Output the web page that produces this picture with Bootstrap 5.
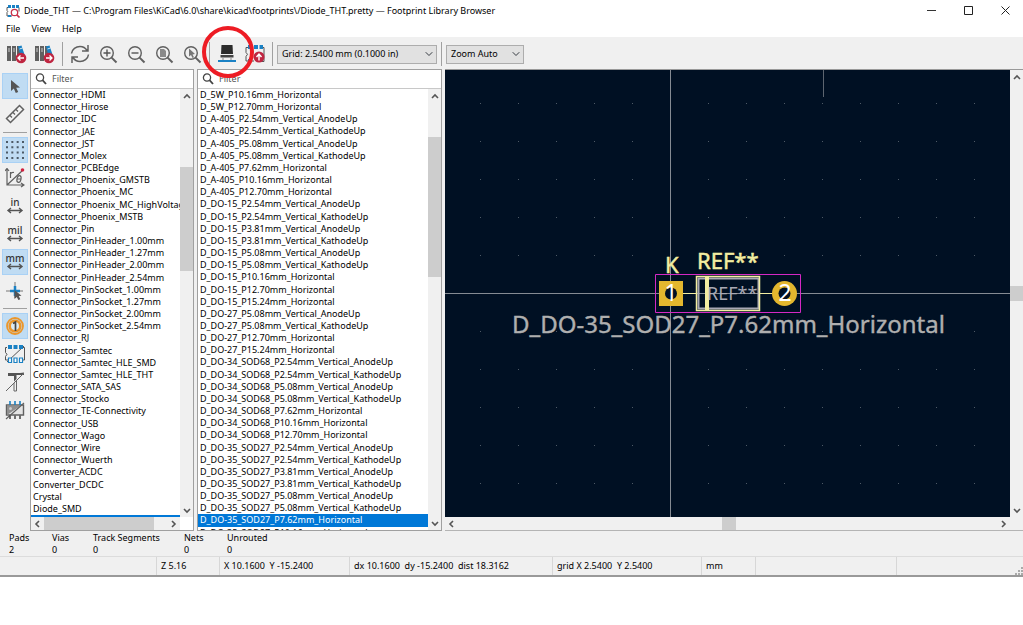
<!DOCTYPE html>
<html lang="en">
<head>
<meta charset="utf-8">
<meta name="viewport" content="width=device-width, initial-scale=1">
<title>Footprint Library Browser</title>
<link href="https://cdn.jsdelivr.net/npm/bootstrap@5.3.0/dist/css/bootstrap.min.css" rel="stylesheet">
<style>
  body { font: 9px/12px "Noto Sans", sans-serif; color: #000; background: #fff; }
  svg { display: block; flex: none; }
  button, select, input { font: inherit; color: inherit; }
  .title-row { height: 21px; padding: 0 0 0 6px; gap: 4px; overflow: hidden; }
  .win-group { margin-right: -1px; }
  .win-btn { width: 37px; height: 20px; }
  .plain-btn { border: 0; background: none; padding: 0; display: flex; align-items: center; justify-content: center; }
  .menu-row { height: 16px; padding: 0 6px; gap: 11px; line-height: 14px; }
  .menu-row a { color: inherit; text-decoration: none; }
  .app-body { background: #f0f0f0; border-bottom: 2px solid #999; }
  .tool-row { height: 32px; padding: 2px 3px 0; }
  .tool-row .plain-btn { width: 28px; height: 28px; }
  .v-rule { width: 1px; height: 24px; background: #a0a0a0; margin: 0 3px; }
  .tool-row .form-select { height: 19px; padding: 0 18px 0 4px; margin: 0 1px; font-size: 9px; line-height: 16px; color: #000;
    border: 1px solid #adadad; border-radius: 0; background-color: #e1e1e1; background-position: right 3px center; background-size: 8px 8px; }
  .tool-row .grid-pick { width: 160px; } .tool-row .zoom-pick { width: 78px; }
  .side-tools { width: 30px; padding: 4px 2px; gap: 2px; }
  .side-tools .plain-btn { width: 26px; height: 26px; }
  .side-tools .on { background: #c0dcf3; box-shadow: inset 0 0 0 1px #a9d1f5; }
  .side-tools text { font-size: 10px; font-weight: 500; fill: #333; text-anchor: middle; }
  .h-rule { height: 1px; width: 24px; background: #a0a0a0; margin: 3px 0 2px; }
  .work { height: 462px; }
  .pane { border: 1px solid #a0a0a0; background: #fff; min-width: 0; }
  .lib-pane { width: 164px; } .fp-pane { width: 245px; margin-left: 3px; }
  .view-pane { margin-left: 3px; border-top: 1px solid #999; border-bottom: 1px solid #b4b4b4; }
  .shrinkable { min-width: 0; min-height: 0; }
  .filter-row { height: 19px; padding: 0 4px; gap: 5px; border-bottom: 1px solid #c8c8c8; }
  .filter-row input { border: 0; outline: 0; width: 100%; padding: 0; background: none; }
  .filter-row input::placeholder { color: #555; opacity: 1; }
  .name-list { overflow: hidden; min-width: 0; min-height: 0; }
  .name-list ul { margin: 0; padding: 0; list-style: none; display: flex; flex-direction: column; }
  #libs { height: 438px; } #parts { height: 450px; }
  .name-list li { flex: 1 1 0; min-height: 0; padding: 0 2px; white-space: nowrap; line-height: 11px; }
  .name-list .sel { background: #0078d7; color: #fff; }
  .bar-v { width: 13px; background: #f0f0f0; padding: 3px 0 2px; }
  .bar-h { height: 13px; background: #f0f0f0; padding: 0 2px; }
  .beside-v { margin-right: 13px; } .above-h { margin-bottom: 13px; }
  .thumb { background: #cdcdcd; align-self: stretch; }
  .bar-v svg { margin: 0 auto; }
  .view { background: #001023; }
  .info { height: 25px; padding: 1px 9px; display: grid; grid-template-columns: 43px 41px 91px 43px 1fr; }
  .status { height: 19px; border-top: 1px solid #dcdcdc; }
  .status div { padding: 3px 4px; border-right: 1px solid #d7d7d7; white-space: pre; }
  .f-blank { width: 157px; } .f-zoom { width: 63px; } .f-pos { width: 130px; } .f-delta { width: 203px; }
  .f-grid { width: 149px; } .f-unit { width: 54px; } .f-tool { width: 141px; }
  .marker { left: 201px; top: 25px; pointer-events: none; }
</style>
</head>
<body>
<svg width="0" height="0" class="position-absolute" aria-hidden="true">
  <defs>
    <g id="up"><path d="M1 6 4 3l3 3" fill="none" stroke="#555" stroke-width="1.600"/></g>
    <g id="down"><path d="M1 2l3 3 3-3" fill="none" stroke="#555" stroke-width="1.600"/></g>
    <g id="left"><path d="M6 1 3 4l3 3" fill="none" stroke="#555" stroke-width="1.600"/></g>
    <g id="right"><path d="M2 1l3 3-3 3" fill="none" stroke="#555" stroke-width="1.600"/></g>
    <g id="lens"><circle cx="8" cy="8" r="6.300" fill="none" stroke="#606060" stroke-width="1.400"/><path d="M12.600 12.600 17.500 17.500" stroke="#606060" stroke-width="2"/></g>
    <g id="find"><circle cx="5" cy="4.500" r="3.600" fill="none" stroke="#444" stroke-width="1.300"/><path d="M7.500 7.200 11 11" stroke="#444" stroke-width="1.800"/></g>
    <g id="books"><path d="M0 1h4v15H0zM5 1h4v15H5zM10 1h3v15h-3z" fill="#606060"/><path d="M1 4h2M6 4h2M1 6h2M6 6h2" stroke="#ccc"/><path d="M11 1.500 14.500.5l3 9-4 1z" fill="#1a81c4"/><path d="m12.500 4 3-1" stroke="#fff" stroke-width=".8"/><circle cx="14" cy="13" r="5.300" fill="#bf2641"/></g>
    <g id="arrow-cur"><path d="M0 0v11l2.800-2.400L4.800 13l2.400-1L5.200 7.800 9 7.400z" fill="#545454"/></g>
    <g id="measure"><path d="M3 12.500h14M6 10l-3 2.500L6 15M14 10l3 2.500-3 2.500" fill="none" stroke="#545454" stroke-width="1.400"/></g>
  </defs>
</svg>

<div class="position-relative">
  <header class="title-row d-flex align-items-center">
    <svg width="14" height="14" viewBox="0 0 14 14"><path d="M2 3.500H1v3q1.500.7 0 2v3.500h5M12 3.500h1v4" fill="none" stroke="#555"/><path d="M2 1h3v3H2zM6 1h3v3H6zM10 1h3v3h-3zM2 11h3v2H2z" fill="#1a81c4"/><circle cx="8.500" cy="8.500" r="3.200" fill="#fff" stroke="#c8324b" stroke-width="1.300"/><path d="m11 11 2.500 2.500" stroke="#c8324b" stroke-width="1.700"/></svg>
    <span class="text-nowrap me-auto">Diode_THT — C:\Program Files\KiCad\6.0\share\kicad\footprints\/Diode_THT.pretty — Footprint Library Browser</span>
    <div class="d-flex win-group">
      <button class="plain-btn win-btn" aria-label="Minimize"><svg width="9" height="9"><path d="M0 4.500h9" stroke="#333"/></svg></button>
      <button class="plain-btn win-btn" aria-label="Maximize"><svg width="9" height="9"><path d="M.5.5h8v8h-8z" fill="none" stroke="#222"/></svg></button>
      <button class="plain-btn win-btn" aria-label="Close"><svg width="9" height="9"><path d="m.5.5 8 8m0-8-8 8" stroke="#222"/></svg></button>
    </div>
  </header>
  <nav class="menu-row d-flex align-items-center"><a href="#">File</a><a href="#">View</a><a href="#">Help</a></nav>

  <div class="app-body">
    <div class="tool-row d-flex align-items-center">
      <button class="plain-btn" aria-label="Previous library"><svg width="20" height="19" viewBox="0 0 20 19"><use href="#books"/><path d="M17 13h-6m2.500-2.500L11 13l2.500 2.500" fill="none" stroke="#fff" stroke-width="1.300"/></svg></button>
      <button class="plain-btn" aria-label="Next library"><svg width="20" height="19" viewBox="0 0 20 19"><use href="#books"/><path d="M11 13h6m-2.500-2.500L17 13l-2.500 2.500" fill="none" stroke="#fff" stroke-width="1.300"/></svg></button>
      <div class="v-rule"></div>
      <button class="plain-btn" aria-label="Refresh"><svg width="20" height="20" viewBox="0 0 20 20" fill="none" stroke="#606060" stroke-width="1.500"><path d="M1.500 9.500C2 5 6 2.500 10 2.500c3 0 5.500 1.500 7 4M18.500 10.500c-.5 4.500-4.500 7-8.500 7-3 0-5.500-1.500-7-4M18 1v6h-6M2 19v-6h6"/></svg></button>
      <button class="plain-btn" aria-label="Zoom in"><svg width="19" height="19"><use href="#lens"/><path d="M8 4.500v7M4.500 8h7" stroke="#545454" stroke-width="1.400"/></svg></button>
      <button class="plain-btn" aria-label="Zoom out"><svg width="19" height="19"><use href="#lens"/><path d="M4.500 8h7" stroke="#545454" stroke-width="1.400"/></svg></button>
      <button class="plain-btn" aria-label="Zoom to fit"><svg width="19" height="19"><use href="#lens"/><path d="M5 4h4l2 2v6H5z" fill="#8a8a8a"/></svg></button>
      <button class="plain-btn" aria-label="Zoom to objects"><svg width="19" height="19"><use href="#lens"/><path d="M6 3.500v8l2-1.500 1.500 3 1.500-.8L9.500 9.500l2.500-.4z" fill="#777"/></svg></button>
      <div class="v-rule"></div>
      <button class="plain-btn" aria-label="3D viewer"><svg width="20" height="20" viewBox="0 0 20 20"><path d="M4.500 1h11l.5 9H4z" fill="#2c2c2c"/><path d="M3.500 11h13v2.500h-13z" fill="#444"/><path d="M6 14v2m8-2v2" stroke="#888"/><path d="M1 16h18v2H1z" fill="#1a81c4"/></svg></button>
      <button class="plain-btn" aria-label="Insert footprint in board"><svg width="20" height="20" viewBox="0 0 20 20"><path d="M3 3.500H1v5q3 1.500 0 4V17h8M17 3.500h2v14h-3" fill="none" stroke="#545454"/><path d="M3 1h4v4H3zM9 1h4v4H9zM14.500 1H18v4h-3.500zM3 15h3v3H3z" fill="#1a81c4"/><circle cx="14" cy="13" r="5.500" fill="#bf2641"/><path d="M14 16.500v-6m-2.500 2.500 2.500-3 2.500 3" fill="none" stroke="#fff" stroke-width="1.400"/></svg></button>
      <div class="v-rule"></div>
      <select class="form-select grid-pick" aria-label="Grid"><option>Grid: 2.5400 mm (0.1000 in)</option></select>
      <div class="v-rule"></div>
      <select class="form-select zoom-pick" aria-label="Zoom"><option>Zoom Auto</option></select>
    </div>

    <main class="work d-flex">
      <div class="side-tools d-flex flex-column align-items-center">
        <button class="plain-btn on" aria-label="Select"><svg width="9" height="13"><use href="#arrow-cur"/></svg></button>
        <button class="plain-btn" aria-label="Measure"><svg width="20" height="20" viewBox="0 0 20 20"><path d="M1.500 14.500 14.500 1.500l4 4-13 13z" fill="#f4f4f4" stroke="#606060" stroke-width="1.500"/><path d="m5 11.500 2 2M8 8.500l2 2M11 5.500l2 2" stroke="#606060" stroke-width="1.300"/></svg></button>
        <div class="h-rule"></div>
        <button class="plain-btn on" aria-label="Show grid"><svg width="20" height="20" viewBox="0 0 20 20"><path d="M1 2h20M1 7.300h20M1 12.600h20M1 18h20" stroke="#4d5a66" stroke-width="2" stroke-dasharray="2 3.330"/></svg></button>
        <button class="plain-btn" aria-label="Polar coordinates"><svg width="20" height="20" viewBox="0 0 20 20"><path d="M2 0v17h17M0 3l2-2.500L4 3M16 15l3 2-3 2M2 17 17 3" fill="none" stroke="#606060" stroke-width="1.200"/><circle cx="17.500" cy="2" r="1.800" fill="#d0213f"/><path d="M5.500 10V4m0 2q1-2 3.500-1.500" fill="none" stroke="#606060" stroke-width="1.200"/><ellipse cx="14" cy="11" rx="2" ry="3.500" fill="none" stroke="#606060" stroke-width="1.200" transform="rotate(12 14 11)"/><path d="M12 11h4" stroke="#606060"/></svg></button>
        <button class="plain-btn" aria-label="Inches"><svg class="overflow-visible" width="20" height="18"><text x="10" y="9">in</text><use href="#measure" y="1"/></svg></button>
        <button class="plain-btn" aria-label="Mils"><svg class="overflow-visible" width="20" height="18"><text x="10" y="9">mil</text><use href="#measure" y="1"/></svg></button>
        <button class="plain-btn on" aria-label="Millimeters"><svg class="overflow-visible" width="20" height="18"><text x="10" y="9">mm</text><use href="#measure" y="1"/></svg></button>
        <button class="plain-btn" aria-label="Full-window crosshairs"><svg width="20" height="20" viewBox="0 0 20 20"><path d="M10 2v16M1 11h17" stroke="#777"/><path d="M10 6v10M5 11h10" stroke="#1a81c4" stroke-width="2.500"/><path d="M9.500 10v9l2.300-2 1.600 3 1.900-.8-1.500-3.200 2.700-.3z" fill="#545454"/></svg></button>
        <div class="h-rule"></div>
        <button class="plain-btn on" aria-label="Pad numbers"><svg width="20" height="20" viewBox="0 0 20 20"><circle cx="10" cy="10" r="8" fill="#c0dcf3" stroke="#eb962b" stroke-width="1.800"/><circle cx="10" cy="10" r="5.300" fill="#dcebf5" stroke="#eb962b" stroke-width="2.600"/><path d="M8 7.500 10.500 6v9" fill="none" stroke="#444" stroke-width="1.700"/></svg></button>
        <button class="plain-btn" aria-label="Sketch pads"><svg width="20" height="20" viewBox="0 0 20 20"><path d="M2 3.500H.5v5q3 1.500 0 4V16H3M18 3.500h1.500V16H18M2 18 19 2" fill="none" stroke="#545454"/><path d="M3 1h4v4H3zM8.500 1h4v4h-4zM14 1h4v4h-4z" fill="#1a81c4"/><path d="M3.500 14h3v4.500h-3zM9 14h3v4.500H9zM14.500 14h3v4.500h-3z" fill="#fff" stroke="#1a81c4" stroke-width="1.200"/></svg></button>
        <button class="plain-btn" aria-label="Sketch text"><svg width="20" height="20" viewBox="0 0 20 20"><path d="M3 1h12l4-.5V3H11.500v4L9 9.500V4H3z" fill="#545454"/><path d="M1 19 19 1M9 11v8h2.500V8" fill="none" stroke="#666"/></svg></button>
        <button class="plain-btn" aria-label="Sketch graphics"><svg width="20" height="20" viewBox="0 0 20 20"><path d="M1.500 5h17v10h-17z" fill="#e4e4e4" stroke="#606060" stroke-width="1.400"/><path d="M2 5.500h14L2 15z" fill="#8f8f8f"/><circle cx="5.500" cy="8.500" r="1.500" fill="#ccc"/><path d="M1 19 19 3" stroke="#606060" stroke-width="1.200"/><path d="M5 15.500V19m5-3.500V19m5-3.500V19" stroke="#444" stroke-width="1.500"/><path d="M5 1v4m5-4v4m5-4v4" stroke="#1a81c4" stroke-width="1.600"/></svg></button>
      </div>

      <section class="pane lib-pane d-flex flex-column flex-shrink-0">
        <label class="filter-row d-flex align-items-center flex-shrink-0"><svg width="12" height="12"><use href="#find"/></svg><input type="search" placeholder="Filter" aria-label="Filter libraries"></label>
        <div class="d-flex flex-fill shrinkable">
          <div class="d-flex flex-column flex-fill name-list">
            <div class="name-list flex-fill"><ul id="libs"></ul></div>
            <div class="bar-h d-flex align-items-center flex-shrink-0"><svg width="8" height="8"><use href="#left"/></svg><div style="flex:3 0 0"></div><div class="thumb" style="flex:110 0 0"></div><div style="flex:16 0 0"></div><svg width="8" height="8"><use href="#right"/></svg></div>
          </div>
          <div class="bar-v above-h d-flex flex-column flex-shrink-0"><svg width="8" height="8"><use href="#up"/></svg><div style="flex:67 0 0"></div><div class="thumb" style="flex:104 0 0"></div><div style="flex:235 0 0"></div><svg width="8" height="8"><use href="#down"/></svg></div>
        </div>
      </section>

      <section class="pane fp-pane d-flex flex-column flex-shrink-0">
        <label class="filter-row d-flex align-items-center flex-shrink-0"><svg width="12" height="12"><use href="#find"/></svg><input type="search" placeholder="Filter" aria-label="Filter footprints"></label>
        <div class="d-flex flex-fill shrinkable">
          <div class="name-list flex-fill"><ul id="parts"></ul></div>
          <div class="bar-v d-flex flex-column flex-shrink-0"><svg width="8" height="8"><use href="#up"/></svg><div style="flex:37 0 0"></div><div class="thumb" style="flex:139 0 0"></div><div style="flex:242 0 0"></div><svg width="8" height="8"><use href="#down"/></svg></div>
        </div>
      </section>

      <section class="view-pane d-flex flex-fill flex-column shrinkable">
        <div class="d-flex flex-fill shrinkable">
          <div class="view flex-fill overflow-hidden shrinkable">
            <svg width="100%" height="100%" viewBox="445 70 565 447" preserveAspectRatio="xMinYMin slice">
              <defs><pattern id="dots" x="442" y="65" width="38" height="38" patternUnits="userSpaceOnUse"><rect x="0" y="0" width="1" height="1" fill="#4e5a66"/></pattern></defs>
              <rect x="445" y="70" width="2000" height="447" fill="url(#dots)"/>
              <path d="M823.500 70v27" stroke="#5d6570"/>
              <path d="M670.500 70v447M445 293.500h2000" stroke="#858b93"/>
              <path d="M698.500 278.500h60v30h-60z" fill="none" stroke="#a9a9b4" stroke-width="2"/>
              <path d="M683 293.500h13M760 293.500h13" stroke="#f2eda1"/>
              <path d="M696.500 276.500h63v34h-63z" fill="none" stroke="#f2eda1" stroke-width="1.500"/>
              <path d="M707 277v33" stroke="#f2eda1" stroke-width="4"/>
              <path d="M655.500 274.500h145v38h-145z" fill="none" stroke="#d428c4"/>
              <path d="M659 281h24v25h-24z" fill="#e3b72e"/><circle cx="671" cy="293.500" r="6" fill="#001023"/>
              <circle cx="784.500" cy="293.500" r="12.500" fill="#e3b72e"/><circle cx="784.500" cy="293.500" r="6" fill="#001023"/>
              <g font-family="Noto Sans, sans-serif">
                <g fill="#fff" font-size="23" text-anchor="middle"><text x="671" y="301">1</text><text x="785" y="301">2</text></g>
                <g fill="#f2eda1" stroke="#f2eda1" stroke-width=".5" font-size="22"><text x="665" y="273">K</text><text x="697" y="269">REF**</text></g>
                <text x="707" y="300" font-size="18" fill="#a9a9b4">REF**</text>
                <text x="512" y="333" font-size="24" fill="#afafaf" stroke="#afafaf" stroke-width=".4">D_DO-35_SOD27_P7.62mm_Horizontal</text>
              </g>
            </svg>
          </div>
          <div class="bar-v d-flex flex-column flex-shrink-0"><svg width="8" height="8"><use href="#up"/></svg><div style="flex:205 0 0"></div><div class="thumb" style="flex:14 0 0"></div><div style="flex:206 0 0"></div><svg width="8" height="8"><use href="#down"/></svg></div>
        </div>
        <div class="bar-h beside-v d-flex align-items-center"><svg width="8" height="8"><use href="#left"/></svg><div style="flex:267 0 0"></div><div class="thumb" style="flex:14 0 0"></div><div style="flex:264 0 0"></div><svg width="8" height="8"><use href="#right"/></svg></div>
      </section>
    </main>

    <div class="info">
      <div>Pads<br>2</div><div>Vias<br>0</div><div>Track Segments<br>0</div><div>Nets<br>0</div><div>Unrouted<br>0</div>
    </div>
    <footer class="status d-flex">
      <div class="f-blank"></div><div class="f-zoom">Z 5.16</div><div class="f-pos">X 10.1600  Y -15.2400</div><div class="f-delta">dx 10.1600  dy -15.2400  dist 18.3162</div><div class="f-grid">grid X 2.5400  Y 2.5400</div><div class="f-unit">mm</div><div class="f-tool"></div>
      <svg class="ms-auto align-self-end" width="8" height="8"><path d="M0 7h8M3 4h5M6 1h2" stroke="#aaa" stroke-width="2" stroke-dasharray="2 1"/></svg>
    </footer>
  </div>
  <svg class="marker position-absolute" width="54" height="54"><circle cx="27" cy="27" r="24" fill="none" stroke="#ed1c24" stroke-width="4"/></svg>
</div>

<script src="https://cdn.jsdelivr.net/npm/bootstrap@5.3.0/dist/js/bootstrap.bundle.min.js"></script>
<script>
  const both = s => [s + '_Vertical_AnodeUp', s + '_Vertical_KathodeUp'];
  const flat = s => [s + '_Horizontal'];
  const libs = ['HDMI', 'Hirose', 'IDC', 'JAE', 'JST', 'Molex', 'PCBEdge', 'Phoenix_GMSTB', 'Phoenix_MC', 'Phoenix_MC_HighVoltage',
    'Phoenix_MSTB', 'Pin', 'PinHeader_1.00mm', 'PinHeader_1.27mm', 'PinHeader_2.00mm', 'PinHeader_2.54mm', 'PinSocket_1.00mm',
    'PinSocket_1.27mm', 'PinSocket_2.00mm', 'PinSocket_2.54mm', 'RJ', 'Samtec', 'Samtec_HLE_SMD', 'Samtec_HLE_THT', 'SATA_SAS',
    'Stocko', 'TE-Connectivity', 'USB', 'Wago', 'Wire', 'Wuerth'].map(n => 'Connector_' + n)
    .concat('Converter_ACDC', 'Converter_DCDC', 'Crystal', 'Diode_SMD', 'Diode_THT');
  const parts = [
    flat('D_5W_P10.16mm'), flat('D_5W_P12.70mm'),
    both('D_A-405_P2.54mm'), both('D_A-405_P5.08mm'), flat('D_A-405_P7.62mm'), flat('D_A-405_P10.16mm'), flat('D_A-405_P12.70mm'),
    both('D_DO-15_P2.54mm'), both('D_DO-15_P3.81mm'), both('D_DO-15_P5.08mm'), flat('D_DO-15_P10.16mm'), flat('D_DO-15_P12.70mm'), flat('D_DO-15_P15.24mm'),
    both('D_DO-27_P5.08mm'), flat('D_DO-27_P12.70mm'), flat('D_DO-27_P15.24mm'),
    both('D_DO-34_SOD68_P2.54mm'), both('D_DO-34_SOD68_P5.08mm'), flat('D_DO-34_SOD68_P7.62mm'), flat('D_DO-34_SOD68_P10.16mm'), flat('D_DO-34_SOD68_P12.70mm'),
    both('D_DO-35_SOD27_P2.54mm'), both('D_DO-35_SOD27_P3.81mm'), both('D_DO-35_SOD27_P5.08mm'), flat('D_DO-35_SOD27_P7.62mm'), flat('D_DO-35_SOD27_P10.16mm')
  ].flat();
  const fill = (id, names, chosen) => document.getElementById(id).append(...names.map(n => {
    const li = document.createElement('li');
    li.textContent = n;
    if (n === chosen) li.className = 'sel';
    return li;
  }));
  fill('libs', libs, 'Diode_THT');
  fill('parts', parts, 'D_DO-35_SOD27_P7.62mm_Horizontal');
</script>
</body>
</html>
